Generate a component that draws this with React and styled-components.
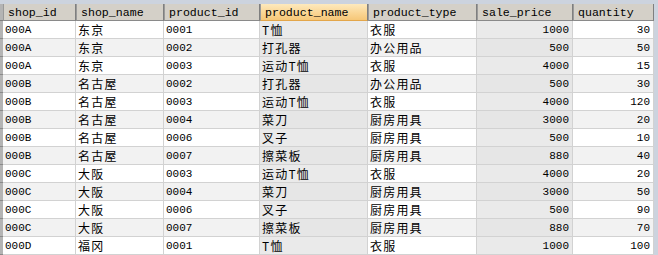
import React from 'react';
import styled, { createGlobalStyle } from 'styled-components';

const GlobalStyle = createGlobalStyle`
  html, body {
    margin: 0;
    padding: 0;
    background: #ccd3de;
  }
`;

const columns = [
  { key: 'shop_id', width: 73 },
  { key: 'shop_name', width: 88, cjk: true },
  { key: 'product_id', width: 96 },
  { key: 'product_name', width: 108, cjk: true, shaded: true, sorted: true },
  { key: 'product_type', width: 109, cjk: true },
  { key: 'sale_price', width: 96, num: true, shaded: true },
  { key: 'quantity', width: 81, num: true },
];

const rows = [
  ['000A', '东京', '0001', 'T恤', '衣服', 1000, 30],
  ['000A', '东京', '0002', '打孔器', '办公用品', 500, 50],
  ['000A', '东京', '0003', '运动T恤', '衣服', 4000, 15],
  ['000B', '名古屋', '0002', '打孔器', '办公用品', 500, 30],
  ['000B', '名古屋', '0003', '运动T恤', '衣服', 4000, 120],
  ['000B', '名古屋', '0004', '菜刀', '厨房用具', 3000, 20],
  ['000B', '名古屋', '0006', '叉子', '厨房用具', 500, 10],
  ['000B', '名古屋', '0007', '擦菜板', '厨房用具', 880, 40],
  ['000C', '大阪', '0003', '运动T恤', '衣服', 4000, 20],
  ['000C', '大阪', '0004', '菜刀', '厨房用具', 3000, 50],
  ['000C', '大阪', '0006', '叉子', '厨房用具', 500, 90],
  ['000C', '大阪', '0007', '擦菜板', '厨房用具', 880, 70],
  ['000D', '福冈', '0001', 'T恤', '衣服', 1000, 100],
];

const template = `3px ${columns.map((c) => `${c.width}px`).join(' ')}`;

const Frame = styled.div`
  width: 658px;
  height: 255px;
  overflow: hidden;
  padding-top: 4px;
  box-sizing: border-box;
  background: #ccd3de;
`;

const Grid = styled.div`
  display: grid;
  grid-template-columns: ${template};
  grid-template-rows: 17px;
  grid-auto-rows: 18px;
  width: 654px;
`;

const Gutter = styled.div`
  background: #b4b4b4;
  border-bottom: 1px solid ${(p) => (p.$head ? '#7f7f7f' : '#8a8a8a')};
  box-sizing: border-box;
`;

const HeadCell = styled.div`
  box-sizing: border-box;
  display: flex;
  align-items: center;
  padding-left: 4px;
  font-family: 'Liberation Mono', 'DejaVu Sans Mono', monospace;
  font-size: 11.6px;
  color: #000;
  white-space: nowrap;
  overflow: hidden;
  border-left: 1px solid #9a9a9a;
  border-right: 1px solid #7f7f7f;
  border-bottom: 1px solid ${(p) => (p.$sorted ? '#e3a64a' : '#8a8a8a')};
  background: ${(p) =>
    p.$sorted
      ? 'linear-gradient(#fde9bd 0%, #fad695 55%, #f6c778 100%)'
      : '#d4d0c8'};
`;

const Cell = styled.div`
  box-sizing: border-box;
  display: flex;
  align-items: center;
  justify-content: ${(p) => (p.$num ? 'flex-end' : 'flex-start')};
  padding: ${(p) => (p.$num ? '0 3px 0 0' : '0 0 0 2px')};
  font-family: 'Liberation Mono', 'Noto Sans CJK SC', monospace;
  font-size: ${(p) => (p.$cjk ? '12px' : '11px')};
  letter-spacing: ${(p) => (p.$cjk ? '1.2px' : '0')};
  color: #000;
  white-space: nowrap;
  overflow: hidden;
  border-right: 1px solid #d2d2d2;
  border-bottom: 1px solid #d2d2d2;
  background: ${(p) => {
    if (p.$shaded) return p.$odd ? '#e6e6e6' : '#eaeaea';
    return p.$odd ? '#f2f2f2' : '#ffffff';
  }};
`;

export default function App() {
  return (
    <>
      <GlobalStyle />
      <Frame>
        <Grid>
          <Gutter $head />
          {columns.map((c) => (
            <HeadCell key={c.key} $sorted={c.sorted}>
              {c.key}
            </HeadCell>
          ))}
          {rows.map((row, r) => (
            <React.Fragment key={r}>
              <Gutter />
              {row.map((v, i) => (
                <Cell
                  key={i}
                  $num={columns[i].num}
                  $cjk={columns[i].cjk}
                  $shaded={columns[i].shaded}
                  $odd={r % 2 === 1}
                >
                  {v}
                </Cell>
              ))}
            </React.Fragment>
          ))}
        </Grid>
      </Frame>
    </>
  );
}
